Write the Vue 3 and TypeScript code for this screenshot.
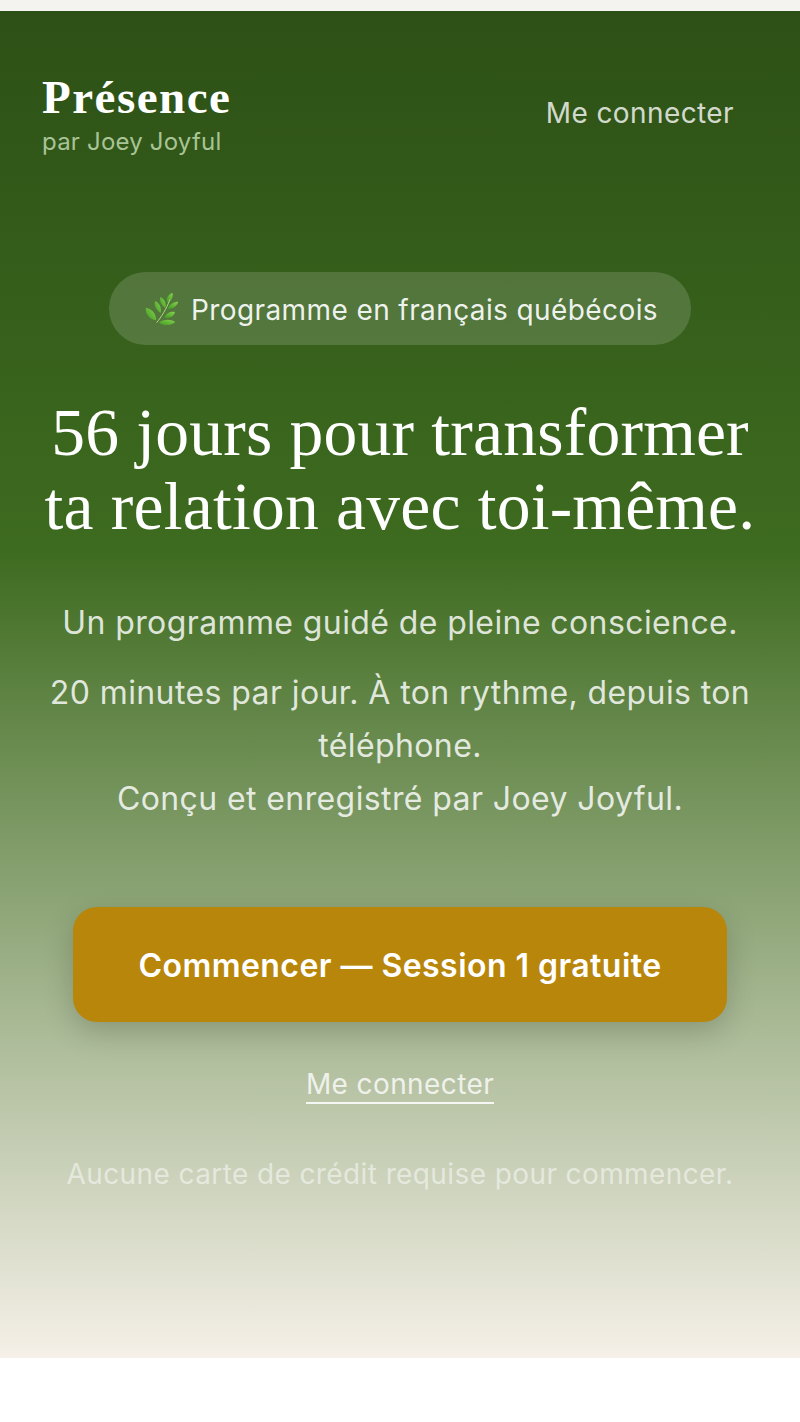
<script setup lang="ts">
// Brin d'herbe 🌿, dessiné à la main faute de police emoji
const leaves = [
  "M56 103C38 100 24 85 25 65C44 68 58 84 56 103Z",
  "M70 81C56 72 49 58 53 45C66 50 74 66 70 81Z",
  "M84 66C72 58 65 45 69 33C81 38 88 52 84 66Z",
  "M89 50C85 38 92 26 105 20C109 32 102 46 89 50Z",
  "M91 69C95 55 108 47 123 47C119 60 106 69 91 69Z",
  "M81 95C86 82 99 76 113 78C111 90 97 98 81 95Z",
  "M65 110C78 99 100 99 114 108C101 120 78 120 65 110Z",
];
</script>

<template>
  <div class="page">
    <section class="hero">
      <header class="nav">
        <div class="brand">
          <div class="brand-name">Présence</div>
          <div class="brand-by">par Joey Joyful</div>
        </div>
        <a class="nav-link">Me connecter</a>
      </header>

      <div class="content">
        <div class="pill">
          <svg class="herb" viewBox="17 12 111 111" width="37" height="37" aria-hidden="true">
            <defs>
              <linearGradient id="leaf" x1="0" y1="1" x2="1" y2="0">
                <stop offset="0" stop-color="#3f9a22" />
                <stop offset="1" stop-color="#86d24e" />
              </linearGradient>
            </defs>
            <path v-for="(d, i) in leaves" :key="i" :d="d" fill="url(#leaf)" />
            <path d="M58 110C72 92 86 72 98 40" fill="none" stroke="#a9dc7c" stroke-width="3" />
          </svg>
          <span class="pill-text">Programme en français québécois</span>
        </div>

        <h1 class="title">56 jours pour transformer<br />ta relation avec toi-même.</h1>

        <p class="lead">Un programme guidé de pleine conscience.</p>
        <p class="lead second">
          20 minutes par jour. À ton rythme, depuis ton téléphone.<br />
          Conçu et enregistré par Joey Joyful.
        </p>

        <button class="cta">Commencer — Session 1 gratuite</button>
        <a class="login">Me connecter</a>
        <p class="note">Aucune carte de crédit requise pour commencer.</p>
      </div>
    </section>
  </div>
</template>

<style scoped>
.page {
  min-height: 1422px;
  background: #fff;
  font-family: Inter, "Liberation Sans", sans-serif;
  letter-spacing: 0.4px;
}
.page::before {
  content: "";
  display: block;
  height: 11px;
  background: #f5f3ef;
}
.hero {
  height: 1347px;
  box-sizing: border-box;
  padding: 62px 42px 0;
  background: linear-gradient(180deg, #2d5016 0%, #3d6b1f 40%, #f5f0e8 100%);
}
.nav {
  display: flex;
  justify-content: space-between;
  align-items: center;
  padding-right: 24px;
}
.brand-name {
  font-family: "Liberation Serif", serif;
  font-weight: 700;
  font-size: 47px;
  line-height: 48px;
  letter-spacing: 1.5px;
  color: #fff;
}
.brand-by {
  font-size: 24px;
  line-height: 30px;
  margin-top: 6px;
  letter-spacing: 0.2px;
  color: #a8c496;
}
.nav-link {
  margin-bottom: 4px;
  font-size: 28px;
  color: rgba(255, 255, 255, 0.8);
}
.content {
  display: flex;
  flex-direction: column;
  align-items: center;
  text-align: center;
  margin: 115px -42px 0;
  padding: 0 42px;
}
.pill {
  display: flex;
  align-items: center;
  gap: 11px;
  height: 73px;
  box-sizing: border-box;
  padding: 0 33px 0 34px;
  border-radius: 37px;
  background: rgba(255, 255, 255, 0.15);
  color: rgba(255, 255, 255, 0.92);
  font-size: 28px;
}
.pill-text {
  padding-top: 3px;
}
.herb {
  flex: none;
}
.title {
  margin: 51px -30px 0;
  font-family: "Liberation Serif", serif;
  font-weight: 400;
  font-size: 67.6px;
  line-height: 74px;
  letter-spacing: 0.2px;
  color: #fff;
  white-space: nowrap;
}
.lead {
  margin: 52px -30px 0;
  font-size: 32px;
  line-height: 53px;
  color: rgba(255, 255, 255, 0.82);
}
.second {
  margin-top: 17px;
}
.cta {
  width: 654px;
  height: 115px;
  margin-top: 82px;
  padding: 2px 0 0;
  border: 0;
  border-radius: 24px;
  background: #b8860b;
  color: #fff;
  font: 600 32px Inter, "Liberation Sans", sans-serif;
  letter-spacing: 0.45px;
  box-shadow: 0 10px 30px rgba(0, 0, 0, 0.18);
}
.login {
  margin-top: 45px;
  font-size: 28px;
  line-height: 35px;
  color: rgba(255, 255, 255, 0.8);
  border-bottom: 2px solid rgba(255, 255, 255, 0.85);
}
.note {
  margin: 52px -30px 0;
  font-size: 28px;
  line-height: 36px;
  color: rgba(255, 255, 255, 0.5);
}
</style>
